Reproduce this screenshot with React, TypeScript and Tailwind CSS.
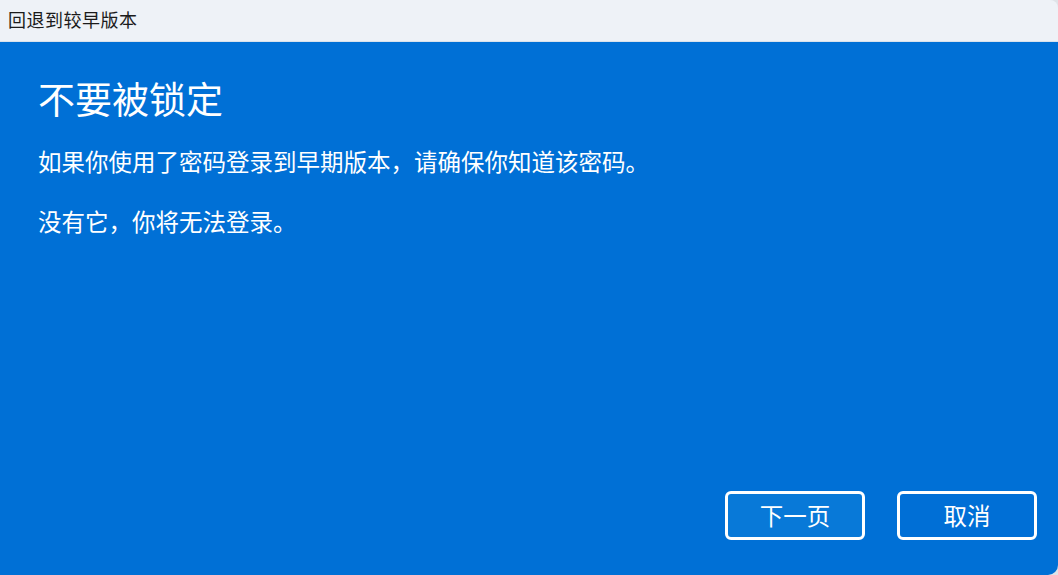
import React from 'react';

const font = { fontFamily: '"Noto Sans CJK SC", "Noto Sans", sans-serif' };

export default function App() {
  return (
    <div className="w-[1058px] h-[575px] bg-[#dfe3e8] overflow-hidden" style={font}>
      <div className="flex flex-col h-full rounded-tr-[8px] rounded-br-[10px] overflow-hidden">
        <div className="h-[42px] shrink-0 bg-[#eef2f7] flex items-center pl-[8px] border-b border-[#d9e2ec]">
          <span className="text-[18px] leading-none text-[#1b1b1b] tracking-[0.5px] -mt-[4px]">回退到较早版本</span>
        </div>
        <div className="flex-1 bg-[#0070d6] flex flex-col pl-[38px] pr-[21px] pt-[32px] pb-[35px] text-white">
          <h1 className="text-[37px] leading-[48px] font-normal">不要被锁定</h1>
          <p className="mt-[23px] text-[23.5px] leading-[32px]">如果你使用了密码登录到早期版本，请确保你知道该密码。</p>
          <p className="mt-[28px] text-[23.5px] leading-[32px]">没有它，你将无法登录。</p>
          <div className="flex-1" />
          <div className="flex justify-end gap-[32px]">
            <button className="w-[140px] h-[49px] rounded-[6px] border-[3px] border-white bg-[#0879d8] text-[23.5px] leading-none text-white">
              下一页
            </button>
            <button className="w-[140px] h-[49px] rounded-[6px] border-[3px] border-white bg-[#006fd6] text-[23.5px] leading-none text-white">
              取消
            </button>
          </div>
        </div>
      </div>
    </div>
  );
}
